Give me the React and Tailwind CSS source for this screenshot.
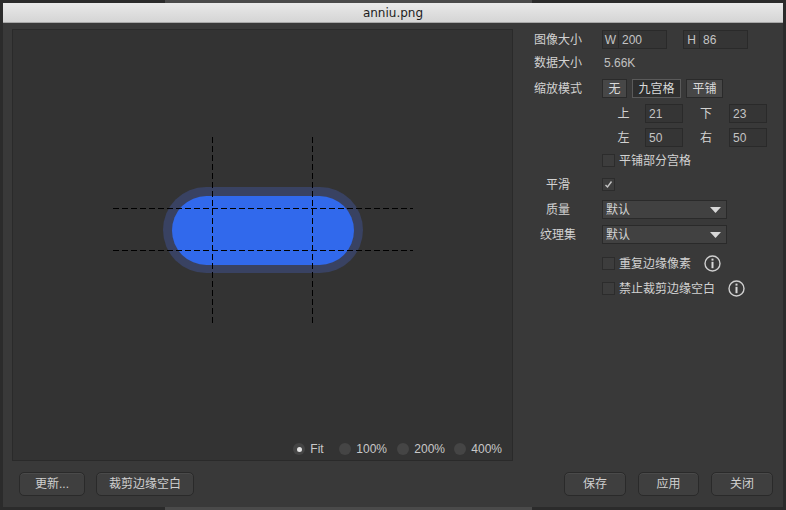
import React from "react";

const font = { fontFamily: '"Liberation Sans", "Noto Sans CJK SC", sans-serif' };
const titleFont = { fontFamily: '"DejaVu Sans", sans-serif' };

const Label = ({ children }) => (
  <div className="w-[60px] shrink-0 text-center text-[#d2d2d2]">{children}</div>
);

const Box = ({ prefix, value, w = "w-[65px]" }) => (
  <div className={`${w} h-[19px] flex items-center border border-[#2a2a2a] bg-[#353535] text-[#c4c4c4]`}>
    {prefix && (
      <span className="w-[16px] h-full flex items-center justify-center border-r border-[#2a2a2a]">
        {prefix}
      </span>
    )}
    <span className="pl-[3px]">{value}</span>
  </div>
);

const ModeButton = ({ children, active, w }) => (
  <div
    className={`${w} h-[19px] flex items-center justify-center border ${
      active ? "bg-[#2e2e2e] border-[#5a5a5a]" : "bg-[#474747] border-[#2a2a2a]"
    } text-[#dadada]`}
  >
    {children}
  </div>
);

const Check = ({ checked }) => (
  <div className="w-[13px] h-[13px] border border-[#2c2c2c] bg-[#3d3d3d] flex items-center justify-center">
    {checked && (
      <svg width="9" height="9" viewBox="0 0 9 9">
        <path d="M1.5 5 L3.5 7 L7.5 1.5" stroke="#c4c4c4" strokeWidth="1.4" fill="none" />
      </svg>
    )}
  </div>
);

const Info = () => (
  <svg width="17" height="17" viewBox="0 0 17 17">
    <circle cx="8.5" cy="8.5" r="7.5" stroke="#cfcfcf" strokeWidth="1.4" fill="none" />
    <rect x="7.5" y="3.6" width="2" height="2" fill="#d8d8d8" />
    <rect x="7.5" y="6.8" width="2" height="6.4" fill="#d8d8d8" />
  </svg>
);

const Select = ({ value }) => (
  <div className="w-[125px] h-[19px] flex items-center justify-between border border-[#2a2a2a] bg-[#414141] pl-[3px] pr-[5px] text-[#d4d4d4]">
    <span>{value}</span>
    <svg width="11" height="6" viewBox="0 0 11 6">
      <path d="M0 0 L11 0 L5.5 6 Z" fill="#d8d8d8" />
    </svg>
  </div>
);

const Radio = ({ label, selected, w }) => (
  <div className={`${w} flex items-center gap-[5px]`}>
    <div className="w-[12px] h-[12px] rounded-full bg-[#454545] flex items-center justify-center">
      {selected && <div className="w-[5px] h-[5px] rounded-full bg-[#e2e2e2]" />}
    </div>
    <span className="text-[#c8c8c8]">{label}</span>
  </div>
);

const FootButton = ({ children, w }) => (
  <div
    className={`${w} h-[24px] flex items-center justify-center rounded-[5px] border border-[#2a2a2a] bg-[#3f3f3f] text-[#d0d0d0] shadow-[inset_0_1px_0_#4a4a4a]`}
  >
    {children}
  </div>
);

function Preview() {
  return (
    <svg width="300" height="186" viewBox="0 0 300 186">
      <rect x="50" y="50" width="200" height="86" rx="43" fill="#394262" />
      <rect x="59" y="59" width="182" height="69" rx="34.5" fill="#3169ec" />
      <g stroke="#000" strokeWidth="1" strokeDasharray="6 3">
        <line x1="99.5" y1="0" x2="99.5" y2="186" />
        <line x1="199.5" y1="0" x2="199.5" y2="186" />
        <line x1="0" y1="71.5" x2="300" y2="71.5" />
        <line x1="0" y1="113.5" x2="300" y2="113.5" />
      </g>
    </svg>
  );
}

export default function App() {
  return (
    <div className="w-[786px] h-[510px] bg-[#2b2b2b] flex flex-col text-[12px] leading-none" style={font}>
      <div className="h-[3px] flex">
        <div className="w-[165px]" />
        <div className="w-[367px] bg-[#4a4a4a]" />
      </div>

      <div className="mx-[3px] h-[504px] flex flex-col bg-[#393939]">
        {/* Title */}
        <div
          className="h-[20px] flex items-center justify-center bg-gradient-to-b from-[#e9e9e9] to-[#d5d5d5] border-b border-[#a8a8a8] text-[#1c1c1c]"
          style={titleFont}
        >
          anniu.png
        </div>

        <div className="flex pt-[6px] pl-[9px]">
          {/* Preview panel */}
          <div className="w-[501px] h-[432px] flex flex-col border border-[#2a2a2a] bg-[#333333]">
            <div className="flex-1 flex items-center justify-center">
              <Preview />
            </div>
            <div className="h-[30px] pt-[8px] pr-[10px] flex items-center justify-end">
              <Radio label="Fit" selected w="w-[46px]" />
              <Radio label="100%" w="w-[58px]" />
              <Radio label="200%" w="w-[57px]" />
              <Radio label="400%" />
            </div>
          </div>

          {/* Properties */}
          <div className="ml-[15px] pt-[1px] flex flex-col">
            <div className="h-[19px] flex items-center">
              <Label>图像大小</Label>
              <div className="ml-[14px] flex gap-[16px]">
                <Box prefix="W" value="200" />
                <Box prefix="H" value="86" />
              </div>
            </div>

            <div className="mt-[4px] h-[19px] flex items-center">
              <Label>数据大小</Label>
              <span className="ml-[16px] text-[#c0c0c0]">5.66K</span>
            </div>

            <div className="mt-[7px] h-[19px] flex items-center">
              <Label>缩放模式</Label>
              <div className="ml-[14px] flex gap-[5px]">
                <ModeButton w="w-[25px]">无</ModeButton>
                <ModeButton w="w-[49px]" active>
                  九宫格
                </ModeButton>
                <ModeButton w="w-[37px]">平铺</ModeButton>
              </div>
            </div>

            <div className="mt-[6px] h-[19px] flex items-center pl-[74px]">
              <span className="w-[43px] text-center text-[#d2d2d2]">上</span>
              <Box value="21" w="w-[38px]" />
              <span className="w-[46px] text-center text-[#d2d2d2]">下</span>
              <Box value="23" w="w-[38px]" />
            </div>

            <div className="mt-[5px] h-[19px] flex items-center pl-[74px]">
              <span className="w-[43px] text-center text-[#d2d2d2]">左</span>
              <Box value="50" w="w-[38px]" />
              <span className="w-[46px] text-center text-[#d2d2d2]">右</span>
              <Box value="50" w="w-[38px]" />
            </div>

            <div className="mt-[4px] h-[19px] flex items-center pl-[74px] gap-[4px]">
              <Check />
              <span className="text-[#d2d2d2]">平铺部分宫格</span>
            </div>

            <div className="mt-[5px] h-[19px] flex items-center">
              <Label>平滑</Label>
              <div className="ml-[14px]">
                <Check checked />
              </div>
            </div>

            <div className="mt-[6px] h-[19px] flex items-center">
              <Label>质量</Label>
              <div className="ml-[14px]">
                <Select value="默认" />
              </div>
            </div>

            <div className="mt-[6px] h-[19px] flex items-center">
              <Label>纹理集</Label>
              <div className="ml-[14px]">
                <Select value="默认" />
              </div>
            </div>

            <div className="mt-[10px] h-[19px] flex items-center pl-[74px]">
              <Check />
              <span className="ml-[4px] text-[#d2d2d2]">重复边缘像素</span>
              <span className="ml-[13px]">
                <Info />
              </span>
            </div>

            <div className="mt-[6px] h-[19px] flex items-center pl-[74px]">
              <Check />
              <span className="ml-[4px] text-[#d2d2d2]">禁止裁剪边缘空白</span>
              <span className="ml-[13px]">
                <Info />
              </span>
            </div>
          </div>
        </div>

        {/* Footer */}
        <div className="mt-[11px] flex items-center pl-[16px] pr-[10px]">
          <FootButton w="w-[66px]">更新...</FootButton>
          <div className="ml-[11px]">
            <FootButton w="w-[98px]">裁剪边缘空白</FootButton>
          </div>
          <div className="ml-auto flex gap-[12px]">
            <FootButton w="w-[62px]">保存</FootButton>
            <FootButton w="w-[61px]">应用</FootButton>
            <FootButton w="w-[62px]">关闭</FootButton>
          </div>
        </div>
      </div>

      <div className="h-[3px] flex">
        <div className="w-[165px]" />
        <div className="w-[367px] bg-[#4a4a4a]" />
      </div>
    </div>
  );
}
